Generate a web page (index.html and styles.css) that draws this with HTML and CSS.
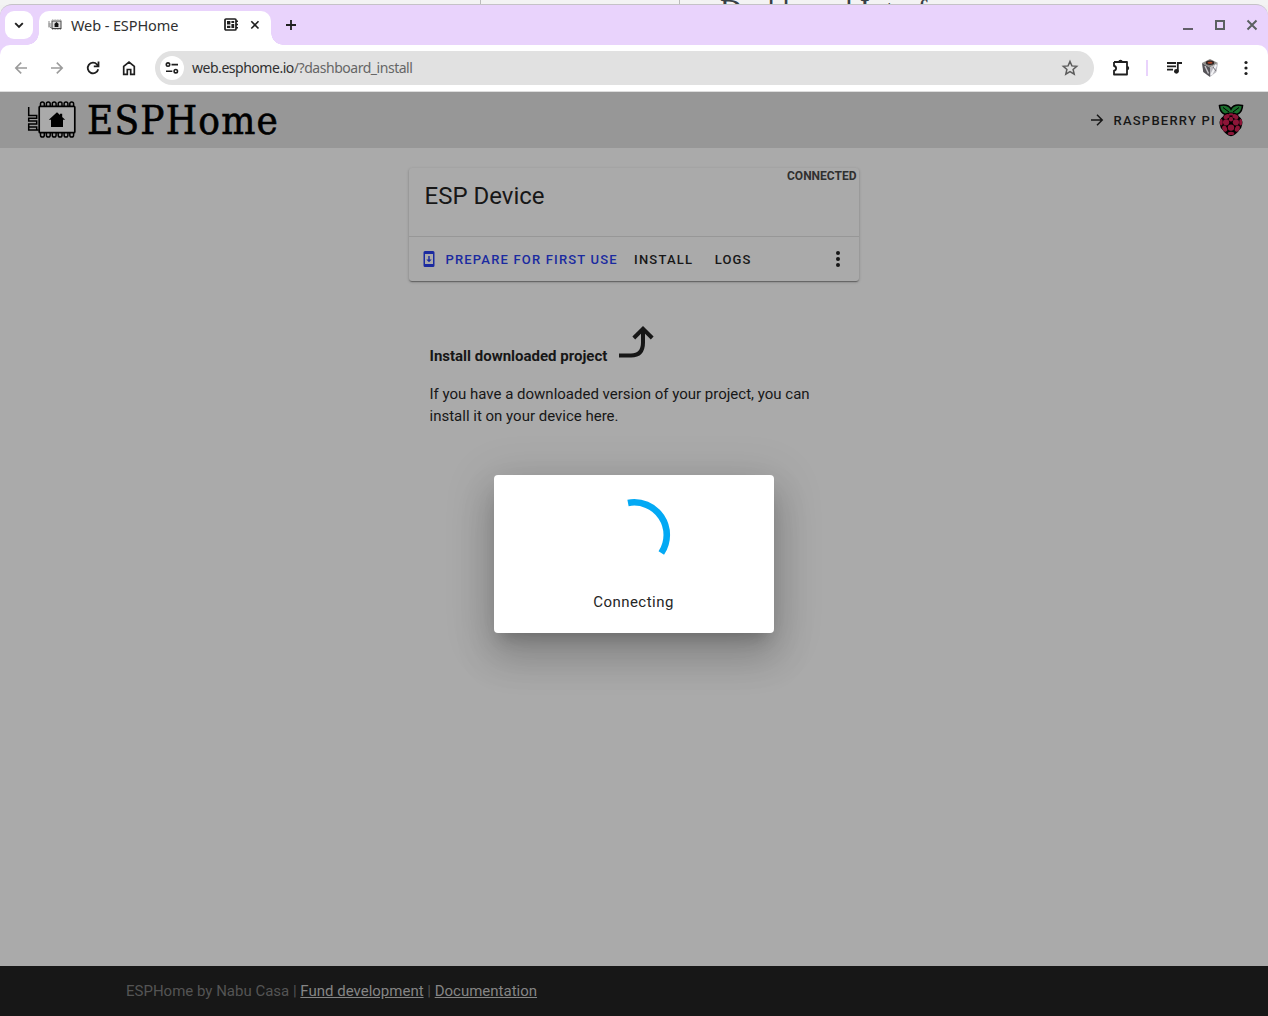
FILE: index.html
```html
<!DOCTYPE html>
<html lang="en">
<head>
<meta charset="utf-8">
<title>Web - ESPHome</title>
<link rel="stylesheet" href="styles.css">
</head>
<body>
<div class="backdrop"><span class="backdrop-title">Dashboard Interface</span></div>
<div class="browser">
  <div class="tabstrip">
    <div class="tab-search"><svg width="28" height="28" viewBox="0 0 28 28"><path d="M10.2 12.2l3.8 3.8 3.8-3.8" fill="none" stroke="#1f1f1f" stroke-width="1.9"/></svg></div>
    <div class="tab">
      <svg class="favicon" width="14" height="12" viewBox="0 0 14 12"><rect x="4" y="2" width="9" height="7.500" fill="#ddd" stroke="#444" stroke-width="1"/><path d="M1 2v6.500M.5 5h3M.5 7h3M2 8.500h2" fill="none" stroke="#888"/><path d="M8.500 3l2.500 2.200h-.6V8H6.600V5.200H6z" fill="#111"/><path d="M4 .9h9M4 10.500h9" stroke="#aaa" stroke-dasharray="1 .6"/></svg>
      <span class="tab-title">Web - ESPHome</span>
      <svg class="tab-device" width="16" height="14" viewBox="0 0 16 14"><rect x="1" y="1" width="11" height="11" rx="1" fill="none" stroke="#1f1f1f" stroke-width="1.7"/><path d="M12 3.2h2M12 6.5h2M12 9.8h2" stroke="#1f1f1f" stroke-width="1.5"/><path d="M3 3h3.4v3.6H3zM7.4 3h2.8v2H7.4zM3 7.7h3.4V10H3zM7.4 6h2.8v4H7.4z" fill="#1f1f1f"/></svg>
      <svg class="tab-close" width="10" height="10" viewBox="0 0 10 10"><path d="M1.3 1.3l7.2 7.2M8.5 1.3L1.3 8.5" stroke="#1f1f1f" stroke-width="1.6"/></svg>
    </div>
    <svg class="new-tab" width="12" height="12" viewBox="0 0 12 12"><path d="M6 1v10M1 6h10" stroke="#1f1f1f" stroke-width="1.8"/></svg>
    <div class="window-buttons">
      <svg width="12" height="12" viewBox="0 0 12 12"><path d="M1 10h10" stroke="#625e68" stroke-width="2"/></svg>
      <svg width="12" height="12" viewBox="0 0 12 12"><rect x="2" y="2" width="8" height="8" fill="none" stroke="#5b6061" stroke-width="2"/></svg>
      <svg width="12" height="12" viewBox="0 0 12 12"><path d="M1.5 1.5l9 9M10.5 1.5l-9 9" stroke="#5b6061" stroke-width="2"/></svg>
    </div>
  </div>
  <div class="toolbar">
    <div class="nav">
      <svg width="16" height="16" viewBox="0 0 16 16"><path d="M14 8H3M8.2 2.6L2.8 8l5.4 5.4" fill="none" stroke="#9b9b9b" stroke-width="1.6"/></svg>
      <svg width="16" height="16" viewBox="0 0 16 16"><path d="M2 8h11M7.8 2.6L13.2 8l-5.4 5.4" fill="none" stroke="#9b9b9b" stroke-width="1.6"/></svg>
      <svg width="16" height="16" viewBox="0 0 16 16"><path d="M13.2 9.2A5.3 5.3 0 1 1 12 4.5l1.500 1.600M13.500 1.600v4.800H8.800" fill="none" stroke="#1f1f1f" stroke-width="1.8"/></svg>
      <svg width="16" height="16" viewBox="0 0 16 16"><path d="M2.7 6.4L8 2l5.3 4.4v8H9.700V9.500H6.300v4.900H2.700z" fill="none" stroke="#1f1f1f" stroke-width="1.7"/></svg>
    </div>
    <div class="omnibox">
      <div class="site-info"><svg width="16" height="16" viewBox="0 0 16 16"><g fill="none" stroke="#1f1f1f" stroke-width="1.6"><circle cx="4" cy="4.6" r="1.7"/><path d="M7.5 4.6H14M2 11.2h6.3"/><circle cx="11.8" cy="11.2" r="1.7"/></g></svg></div>
      <div class="url"><span>web.esphome.io</span><span class="url-path">/?dashboard_install</span></div>
      <svg width="18" height="18" viewBox="0 0 18 18"><path d="M9 2.5l1.9 4.4 4.8.4-3.6 3.2 1.1 4.7L9 12.7l-4.2 2.5 1.1-4.7-3.6-3.2 4.8-.4z" fill="none" stroke="#5c5c5c" stroke-width="1.5"/></svg>
    </div>
    <div class="tools">
      <svg width="20" height="20" viewBox="0 0 20 20"><path d="M3 4h13v4.200M16 12v4.500H3v-3.800c2.800-.4 2.800-4.300 0-4.700V4M16 7.500v5" fill="none" stroke="#1f1f1f" stroke-width="1.8" stroke-linejoin="round"/><path d="M7.300 4a2.200 2.200 0 0 1 4.400 0zM16 7.900a2.200 2.200 0 0 1 0 4.400z" fill="#1f1f1f"/></svg>
      <span class="divider"></span>
      <svg class="music" width="18" height="18" viewBox="0 0 18 18"><path d="M1 4h9M1 7.3h9M1 10.6h6" stroke="#1f1f1f" stroke-width="1.8"/><path d="M11.8 12V4H16" fill="none" stroke="#1f1f1f" stroke-width="1.8"/><circle cx="10.4" cy="12.3" r="2.4" fill="#1f1f1f"/></svg>
      <svg class="avatar" width="18" height="20" viewBox="0 0 18 20"><path d="M9 1l8 4-8 4.500L1 5z" fill="#8c8b87"/><path d="M1 5l8 4.500V19l-6.800-5z" fill="#555358"/><path d="M17 5L9 9.500V19l6.400-5z" fill="#b9b8be"/><path d="M4 8l3.500 7.500" stroke="#c9c7cb" stroke-width="1.400"/><path d="M10.200 17l4.900-10" stroke="#f2f2f5" stroke-width="2"/><path d="M12 9l3 4" stroke="#747278"/><ellipse cx="9" cy="4.800" rx="4.200" ry="2.200" fill="#302424"/><ellipse cx="9" cy="4.800" rx="2.500" ry="1" fill="#ad482a"/></svg>
      <svg class="menu" width="6" height="16" viewBox="0 0 6 16"><g fill="#1f1f1f"><circle cx="3" cy="2.5" r="1.6"/><circle cx="3" cy="8" r="1.6"/><circle cx="3" cy="13.5" r="1.6"/></g></svg>
    </div>
  </div>
</div>
<div class="page">
  <header>
    <svg class="logo" width="50" height="40" viewBox="0 0 50 40">
      <rect x="12.200" y="6.300" width="35.600" height="26.400" rx="1" fill="#aaa" stroke="#000" stroke-width="1.700"/>
      <path d="M13.500 6V3.700q0-1.800 1.900-1.800t1.900 1.800V6M19.400 6V3.700q0-1.800 1.900-1.800t1.900 1.800V6M25.300 6V3.700q0-1.800 1.900-1.800t1.900 1.800V6M31.200 6V3.700q0-1.800 1.900-1.800T35 3.700V6M37.100 6V3.700q0-1.800 1.900-1.800t1.900 1.800V6M42.800 6V3.700q0-1.800 1.900-1.800t1.900 1.800V6M13.500 33v2.300q0 1.800 1.900 1.800t1.900-1.800V33M19.400 33v2.300q0 1.800 1.900 1.800t1.900-1.800V33M25.300 33v2.300q0 1.800 1.900 1.800t1.900-1.800V33M31.200 33v2.300q0 1.800 1.900 1.800t1.900-1.800V33M37.100 33v2.300q0 1.800 1.900 1.800t1.900-1.800V33M42.800 33v2.300q0 1.800 1.900 1.800t1.900-1.800V33" fill="none" stroke="#000" stroke-width="1.500"/>
      <path d="M1.700 7v8.500h8v2.700H1.700v2.900h8V24H1.700v2.900h8v3H1.700v-3M9.700 29.900h2" fill="none" stroke="#000" stroke-width="1.500"/>
      <path d="M30 12.300l8.200 7.500h-2.200v7.300H24v-7.300h-2.200zM33 13.700h2.200v4H33z"/>
    </svg>
    <span class="wordmark">ESPHome</span>
    <a class="pi-link">
      <svg width="14" height="14" viewBox="0 0 14 14"><path d="M1 7h11M7 1.800L12.200 7 7 12.200" fill="none" stroke="#171717" stroke-width="1.500"/></svg>
      <span>RASPBERRY PI</span>
      <svg class="berry" width="26" height="33" viewBox="0 0 26 33">
        <path d="M13 10.500C7 12 2 9 1.500 1.500Q10-.500 13 5 16-.500 24.500 1.500C24 9 19 12 13 10.500z" fill="#1a6e2c" stroke="#000" stroke-width="1.600"/>
        <path d="M5 3.500l6 4.500M21 3.500L15 8" stroke="#000"/>
        <path d="M13 8.500q6-.5 8 4 4 2.500 3.300 7.500-.5 4-3 6-3 5-8.300 6.300-5.300-1.300-8.300-6.300-2.500-2-3-6Q1 15 5 12.500q2-4.500 8-4z" fill="#000"/>
        <g fill="#8d1538"><ellipse cx="8.600" cy="12.700" rx="3.200" ry="2.200" transform="rotate(-30 8.600 12.700)"/><ellipse cx="17.400" cy="12.700" rx="3.200" ry="2.200" transform="rotate(30 17.400 12.700)"/><ellipse cx="13" cy="10.400" rx="2.400" ry="1.100"/><circle cx="8.100" cy="18.300" r="3.100"/><circle cx="17.900" cy="18.300" r="3.100"/><circle cx="13" cy="23.600" r="3.200"/><ellipse cx="13" cy="15.200" rx="2.100" ry="2.400"/><ellipse cx="3.300" cy="18.300" rx="1.400" ry="3.200"/><ellipse cx="22.700" cy="18.300" rx="1.400" ry="3.200"/><ellipse cx="6.700" cy="24.600" rx="2.300" ry="3.200" transform="rotate(-25 6.700 24.600)"/><ellipse cx="19.300" cy="24.600" rx="2.300" ry="3.200" transform="rotate(25 19.300 24.600)"/><ellipse cx="13" cy="29.400" rx="3.200" ry="1.700"/></g>
      </svg>
    </a>
  </header>
  <main>
    <section class="card">
      <div class="card-head"><h1>ESP Device</h1><span class="status">CONNECTED</span></div>
      <div class="actions">
        <svg width="12" height="16" viewBox="0 0 12 16"><path d="M2 0h8a1.500 1.500 0 0 1 1.500 1.500v13A1.500 1.500 0 0 1 10 16H2a1.500 1.500 0 0 1-1.500-1.500v-13A1.500 1.500 0 0 1 2 0zm0 3v10h8V3z" fill="#1a2aa0" fill-rule="evenodd"/><path d="M6 11.200L3.300 8.400h2V5h1.400v3.400h2z" fill="#1a2aa0"/></svg>
        <span class="prepare">PREPARE FOR FIRST USE</span>
        <span class="install">INSTALL</span>
        <span class="logs">LOGS</span>
        <svg class="more" width="6" height="16" viewBox="0 0 6 16"><g fill="#171717"><circle cx="3" cy="2" r="2"/><circle cx="3" cy="8" r="2"/><circle cx="3" cy="14" r="2"/></g></svg>
      </div>
    </section>
    <section class="intro">
      <div class="intro-head"><h2>Install downloaded project</h2><svg width="36" height="34" viewBox="0 0 36 34"><path d="M0 30.500h12q12 0 12-13V4M14.800 13L24 3.800l9.200 9.200" fill="none" stroke="#171717" stroke-width="4"/></svg></div>
      <p>If you have a downloaded version of your project, you can install it on your device here.</p>
    </section>
  </main>
  <footer>ESPHome by Nabu Casa | <a>Fund development</a> | <a>Documentation</a></footer>
  <div class="dialog">
    <svg width="74" height="74" viewBox="0 0 74 74"><path d="M31 4.900A32.600 32.600 0 0 1 64.300 55" fill="none" stroke="#03a9f4" stroke-width="6.600"/></svg>
    <span>Connecting</span>
  </div>
</div>
</body>
</html>
```
FILE: styles.css
```css
* { box-sizing: border-box; }
body {
  margin: 0;
  height: 1016px;
  overflow: hidden;
  display: flex;
  flex-direction: column;
  background: #f1f1f1;
  font-family: Roboto, sans-serif;
  font-size: 15px;
  color: #171717;
}
svg { display: block; flex: none; }
.backdrop {
  height: 5px;
  flex: none;
  overflow: hidden;
  padding-left: 720px;
  background: linear-gradient(90deg, transparent 480px, #bbb 480px, #bbb 481px, transparent 481px, transparent 679px, #bbb 679px, #bbb 680px, transparent 680px), #f3f3f3;
}
.backdrop-title {
  display: block;
  margin-top: -4px;
  font: 30.500px/30px "Liberation Serif", serif;
  color: #374046;
  white-space: nowrap;
}
.browser { flex: none; height: 88px; margin-top: -1px; border-top: 1px solid #c5c2c7; border-radius: 12px 12px 0 0; background: #e9d3fc; position: relative; }
.tabstrip { height: 40px; display: flex; align-items: flex-start; }
.tab-search { width: 28px; height: 28px; margin: 6px 0 0 5px; border-radius: 9px; background: #fff; }
.tab {
  position: relative;
  width: 232px;
  height: 34px;
  margin: 6px 0 0 6px;
  padding: 0 11px 6px 9px;
  border-radius: 10px 10px 0 0;
  background: #fff;
  display: flex;
  align-items: center;
}
.tab::before, .tab::after {
  content: "";
  position: absolute;
  bottom: 0;
  width: 12px;
  height: 12px;
}
.tab::before { left: -12px; background: radial-gradient(circle at 0 0, transparent 11.500px, #fff 12px); }
.tab::after { right: -12px; background: radial-gradient(circle at 100% 0, transparent 11.500px, #fff 12px); }
.favicon { margin: 0 9px 0 0; }
.tab-title { width: 153px; font: 14.500px/18px "Noto Sans", sans-serif; letter-spacing: -.1px; color: #303030; white-space: nowrap; padding-bottom: 1px; }
.tab-close { margin-left: 10px; }
.new-tab { margin: 14px 0 0 14px; }
.window-buttons { display: flex; gap: 20px; margin: 14px 10px 0 auto; }
.toolbar {
  height: 47px;
  display: flex;
  align-items: center;
  background: #fff;
  border-radius: 10px 10px 0 0;
  border-bottom: 1px solid #ddd;
}
.nav { display: flex; gap: 20px; margin-left: 13px; }
.omnibox { width: 939px; height: 34px; margin-left: 18px; padding: 0 15px 0 5px; border-radius: 17px; background: #e1e1e1; display: flex; align-items: center; }
.site-info { width: 24px; height: 24px; border-radius: 12px; background: #fff; display: grid; place-items: center; }
.url { flex: 1; margin-left: 8px; font: 14px/20px "Noto Sans", sans-serif; letter-spacing: -.47px; color: #303030; }
.url-path { color: #666; }
.tools { display: flex; align-items: center; margin-left: 17px; }
.divider { width: 2px; height: 16px; margin: 0 18px 0 15px; background: #e9d3fc; }
.avatar { margin-left: 17px; }
.menu { margin-left: 24px; }
.page { position: relative; flex: 1; display: flex; flex-direction: column; background: #aaa; }
header { height: 56px; display: flex; align-items: center; padding: 0 24px 0 27px; background: #979797; }
.wordmark {
  margin: 0 0 0 10px;
  font: 40px/56px "DejaVu Serif Condensed", "DejaVu Serif", serif;
  font-stretch: condensed;
  letter-spacing: 1.200px;
  -webkit-text-stroke: .6px #000;
  color: #000;
}
.pi-link { display: flex; align-items: center; margin-left: auto; font-size: 13px; font-weight: 500; letter-spacing: 1.230px; }
.pi-link span { margin-left: 10px; padding-top: 1px; }
.berry { margin-left: 2px; }
main { flex: 1; padding-top: 20px; display: flex; flex-direction: column; align-items: center; }
.card {
  width: 450px;
  height: 113px;
  border-radius: 3px;
  background: #aaa;
  box-shadow: 0 2px 1px -1px rgba(0,0,0,.2), 0 1px 1px rgba(0,0,0,.14), 0 1px 3px rgba(0,0,0,.24);
}
.card-head { height: 69px; border-bottom: 1px solid #979797; display: flex; justify-content: space-between; padding: 0 2.500px 0 15.500px; }
h1 { margin: 12px 0 0; font-size: 24px; line-height: 32px; font-weight: 400; }
.status { margin-top: 1px; font-size: 12px; line-height: 14px; font-weight: 700; color: #303030; }
.actions { height: 44px; display: flex; align-items: center; padding: 0 18px 0 14px; font-size: 13px; font-weight: 500; letter-spacing: 1.180px; white-space: nowrap; }
.prepare { margin-left: 10.500px; color: #1a2aa0; }
.install { margin-left: 16.300px; }
.logs { margin-left: 21.500px; }
.more { margin-left: auto; }
.intro { width: 409px; margin-top: 44px; }
.intro-head { display: flex; align-items: flex-end; height: 39px; padding-bottom: 5px; }
h2 { margin: 0 12px 0 0; font-size: 15px; line-height: 6px; font-weight: 700; }
p { width: 390px; margin: 19px 0 0; line-height: 22px; }
footer { height: 50px; padding-left: 126px; line-height: 50px; background: #171717; color: #545454; }
footer a { color: #858585; text-decoration: underline; }
.dialog {
  position: absolute;
  left: 494px;
  top: 383px;
  width: 280px;
  height: 158px;
  border-radius: 4px;
  background: #fff;
  display: flex;
  flex-direction: column;
  align-items: center;
  padding-top: 23px;
  box-shadow: 0 11px 15px -7px rgba(0,0,0,.2), 0 24px 38px 3px rgba(0,0,0,.14), 0 9px 46px 8px rgba(0,0,0,.12);
}
.dialog span { margin: 18px 1px 0 0; line-height: 24px; letter-spacing: .47px; color: #252525; }
```
